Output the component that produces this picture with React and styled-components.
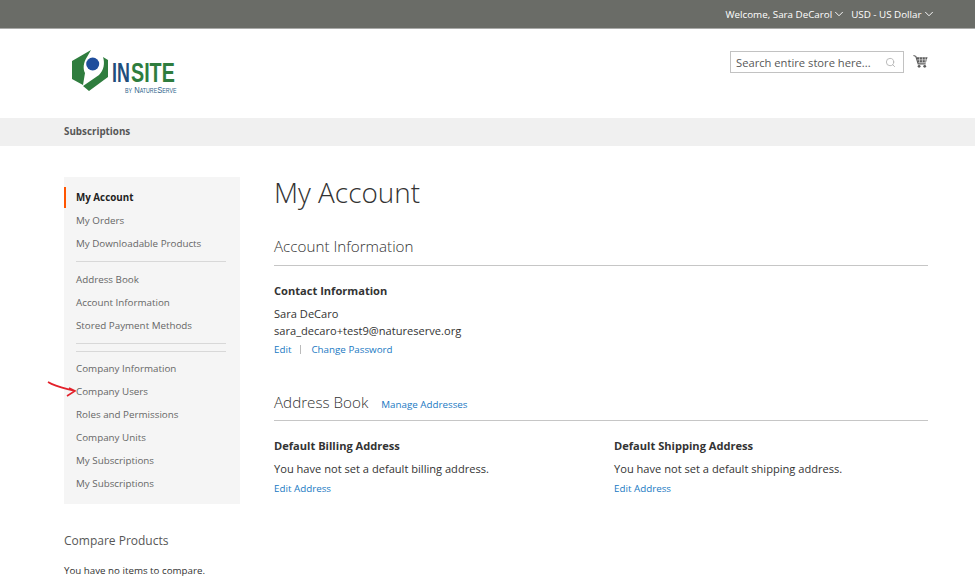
import React from "react";
import styled, { createGlobalStyle } from "styled-components";
import { ChevronDown, Search } from "lucide-react";

const GlobalStyle = createGlobalStyle`
body {
  margin: 0;
  background: #fff;
  font-family: "Open Sans", "Liberation Sans", sans-serif;
  color: #333;
  overflow: hidden;
}
`;

const Page = styled.div`
width: 975px;
height: 584px;
overflow: hidden;
`;

const TopBar = styled.div`
height: 28px;
background-color: #6a6c67;
border-bottom: 1px solid #a9aaa8;
display: flex;
justify-content: flex-end;
align-items: center;
gap: 5px;
padding-right: 39.5px;
color: #fff;
font-size: 9.8px;
`;

const TopItem = styled.span`
display: flex;
align-items: center;
`;

const Header = styled.div`
height: 89px;
display: flex;
justify-content: space-between;
padding: 0 47px 0 66px;
`;

const LogoWrap = styled.div`
margin-top: 15px;
`;

const SearchArea = styled.div`
display: flex;
align-items: flex-start;
gap: 9px;
padding-top: 22px;
`;

const SearchBox = styled.div`
box-sizing: border-box;
width: 174px;
height: 22px;
border: 1px solid #c2c2c2;
display: flex;
align-items: center;
justify-content: space-between;
padding: 0 7px 0 5px;
color: #575757;
font-size: 11.2px;
`;

const CartWrap = styled.div`
padding-top: 1px;
`;

const NavBar = styled.div`
height: 27px;
padding: 0 0 1px 64px;
background-color: #f0f0f0;
display: flex;
align-items: center;
font-size: 9.8px;
font-weight: 700;
color: #575757;
`;

const Columns = styled.div`
display: flex;
padding: 30px 47px 0 64px;
gap: 34px;
`;

const SideColumn = styled.div`
width: 176px;
flex-shrink: 0;
padding-top: 1px;
`;

const Sidebar = styled.div`
background-color: #f5f5f5;
padding: 9px 14px 9px 12px;
height: 309px;
`;

const SideLink = styled.div`
position: relative;
height: 23px;
display: flex;
align-items: center;
font-size: 9.8px;
color: ${(p) => (p.$active ? "#222" : "#666")};
font-weight: ${(p) => (p.$active ? 700 : 400)};
${(p) =>
  p.$active &&
  `&::before {
    content: "";
    position: absolute;
    left: -12px;
    top: 1px;
    bottom: 1px;
    width: 2px;
    background: #ff5501;
  }`}
`;

const SideRule = styled.div`
height: 1px;
background: #d8d8d8;
margin: ${(p) => p.$margin};
`;

const Arrow = styled.svg`
position: absolute;
left: -30px;
top: -2px;
`;

const CompareTitle = styled.div`
margin-top: 28px;
font-size: 12px;
color: #575757;
`;

const CompareText = styled.div`
margin-top: 15px;
font-size: 9.75px;
color: #333;
`;

const Main = styled.div`
flex: 1;
`;

const PageTitle = styled.h1`
margin: 0;
font-size: 27.9px;
font-weight: 300;
line-height: 32px;
color: #333;
`;

const SectionHead = styled.div`
display: flex;
align-items: baseline;
gap: 13px;
border-bottom: 1px solid #c6c6c6;
height: ${(p) => p.$h}px;
margin-top: ${(p) => p.$top}px;
`;

const SectionTitle = styled.h2`
margin: 0;
font-size: 15.2px;
font-weight: 300;
line-height: 22px;
color: #333;
`;

const Link = styled.span`
color: #1979c3;
font-size: 9.8px;
`;

const BlockTitle = styled.div`
font-size: 11.1px;
font-weight: 700;
line-height: 16px;
color: #333;
margin-top: ${(p) => p.$top}px;
`;

const BodyText = styled.div`
font-size: 11.1px;
line-height: 17px;
color: #333;
`;

const ActionRow = styled.div`
display: flex;
align-items: center;
height: ${(p) => p.$h}px;
`;

const Pipe = styled.span`
width: 1px;
height: 9px;
background: #bbb;
margin: 0 10px 0 9px;
`;

const AddressGrid = styled.div`
display: grid;
grid-template-columns: 340px 1fr;
`;

const TextGap = styled.div`
height: ${(p) => p.$h}px;
`;

function Logo() {
  return (
    <svg width="112" height="52" viewBox="66 44 112 52">
      <path d="M72 61 L91 50 L87 57 C83 63 83 69 85 73 L83 85 L72 79 Z" fill="#2f7d3e" />
      <path d="M103 57 L108 60 L108 77 L89 91 L83 86 L99 75 C104 70 105 63 103 57 Z" fill="#2f7d3e" />
      <circle cx="92.7" cy="64" r="6.5" fill="#1f4e9c" />
      <g fontFamily="'Liberation Sans', sans-serif">
        <text transform="translate(112 82) scale(0.66 1)" fontSize="27" fontWeight="700" fill="#1f4e7c">IN</text>
        <text transform="translate(131 82) scale(0.73 1)" fontSize="27" fontWeight="700" fill="#2f7d3e">SITE</text>
        <text transform="translate(125 92.5) scale(0.8 1)" fontSize="9.5" fill="#2c5f8a" style={{ fontVariant: "small-caps" }}>by NatureServe</text>
      </g>
    </svg>
  );
}

function CartIcon() {
  return (
    <svg width="15" height="15" viewBox="0 0 16 15" fill="none">
      <path d="M0.5 1 L3 2 L5.5 10 H13.5" stroke="#5a5a5a" strokeWidth="1.2" />
      <path d="M3.6 3 H15.5 L13.8 8.5 H5.2 Z" fill="#5a5a5a" />
      <path d="M7 3v5.5M10 3v5.5M13 3v5.5M4.5 5.7h10.5" stroke="#fff" strokeWidth="0.6" />
      <circle cx="6.5" cy="12.6" r="1.5" fill="#5a5a5a" />
      <circle cx="12.5" cy="12.6" r="1.5" fill="#5a5a5a" />
    </svg>
  );
}

function App() {
  return (
    <Page>
      <GlobalStyle />
      <TopBar>
        <TopItem>Welcome, Sara DeCarol<ChevronDown size={14} strokeWidth={1.6} /></TopItem>
        <TopItem>USD - US Dollar<ChevronDown size={14} strokeWidth={1.6} /></TopItem>
      </TopBar>
      <Header>
        <LogoWrap><Logo /></LogoWrap>
        <SearchArea>
          <SearchBox>
            <span>Search entire store here...</span>
            <Search size={11} color="#b5b5b5" />
          </SearchBox>
          <CartWrap><CartIcon /></CartWrap>
        </SearchArea>
      </Header>
      <NavBar>Subscriptions</NavBar>
      <Columns>
        <SideColumn>
          <Sidebar>
            <SideLink $active>My Account</SideLink>
            <SideLink>My Orders</SideLink>
            <SideLink>My Downloadable Products</SideLink>
            <SideRule $margin="6px 0 6px" />
            <SideLink>Address Book</SideLink>
            <SideLink>Account Information</SideLink>
            <SideLink>Stored Payment Methods</SideLink>
            <SideRule $margin="6px 0 7px" />
            <SideRule $margin="0 0 5px" />
            <SideLink>Company Information</SideLink>
            <SideLink>
              <Arrow width="30" height="22" viewBox="0 0 30 22" fill="none">
                <path d="M2 4 C10 9 18 10 29 13 M23 10 L29 13 L21 18" stroke="#e3202a" strokeWidth="1.6" />
              </Arrow>
              Company Users
            </SideLink>
            <SideLink>Roles and Permissions</SideLink>
            <SideLink>Company Units</SideLink>
            <SideLink>My Subscriptions</SideLink>
            <SideLink>My Subscriptions</SideLink>
          </Sidebar>
          <CompareTitle>Compare Products</CompareTitle>
          <CompareText>You have no items to compare.</CompareText>
        </SideColumn>
        <Main>
          <PageTitle>My Account</PageTitle>
          <SectionHead $h={30} $top={27}>
            <SectionTitle>Account Information</SectionTitle>
          </SectionHead>
          <BlockTitle $top={17}>Contact Information</BlockTitle>
          <TextGap $h={6} />
          <BodyText>Sara DeCaro</BodyText>
          <BodyText>sara_decaro+test9@natureserve.org</BodyText>
          <ActionRow $h={21}>
            <Link>Edit</Link>
            <Pipe />
            <Link>Change Password</Link>
          </ActionRow>
          <SectionHead $h={29} $top={31}>
            <SectionTitle>Address Book</SectionTitle>
            <Link>Manage Addresses</Link>
          </SectionHead>
          <AddressGrid>
            <div>
              <BlockTitle $top={17}>Default Billing Address</BlockTitle>
              <TextGap $h={6} />
              <BodyText>You have not set a default billing address.</BodyText>
              <ActionRow $h={23}><Link>Edit Address</Link></ActionRow>
            </div>
            <div>
              <BlockTitle $top={17}>Default Shipping Address</BlockTitle>
              <TextGap $h={6} />
              <BodyText>You have not set a default shipping address.</BodyText>
              <ActionRow $h={23}><Link>Edit Address</Link></ActionRow>
            </div>
          </AddressGrid>
        </Main>
      </Columns>
    </Page>
  );
}

export default App;
